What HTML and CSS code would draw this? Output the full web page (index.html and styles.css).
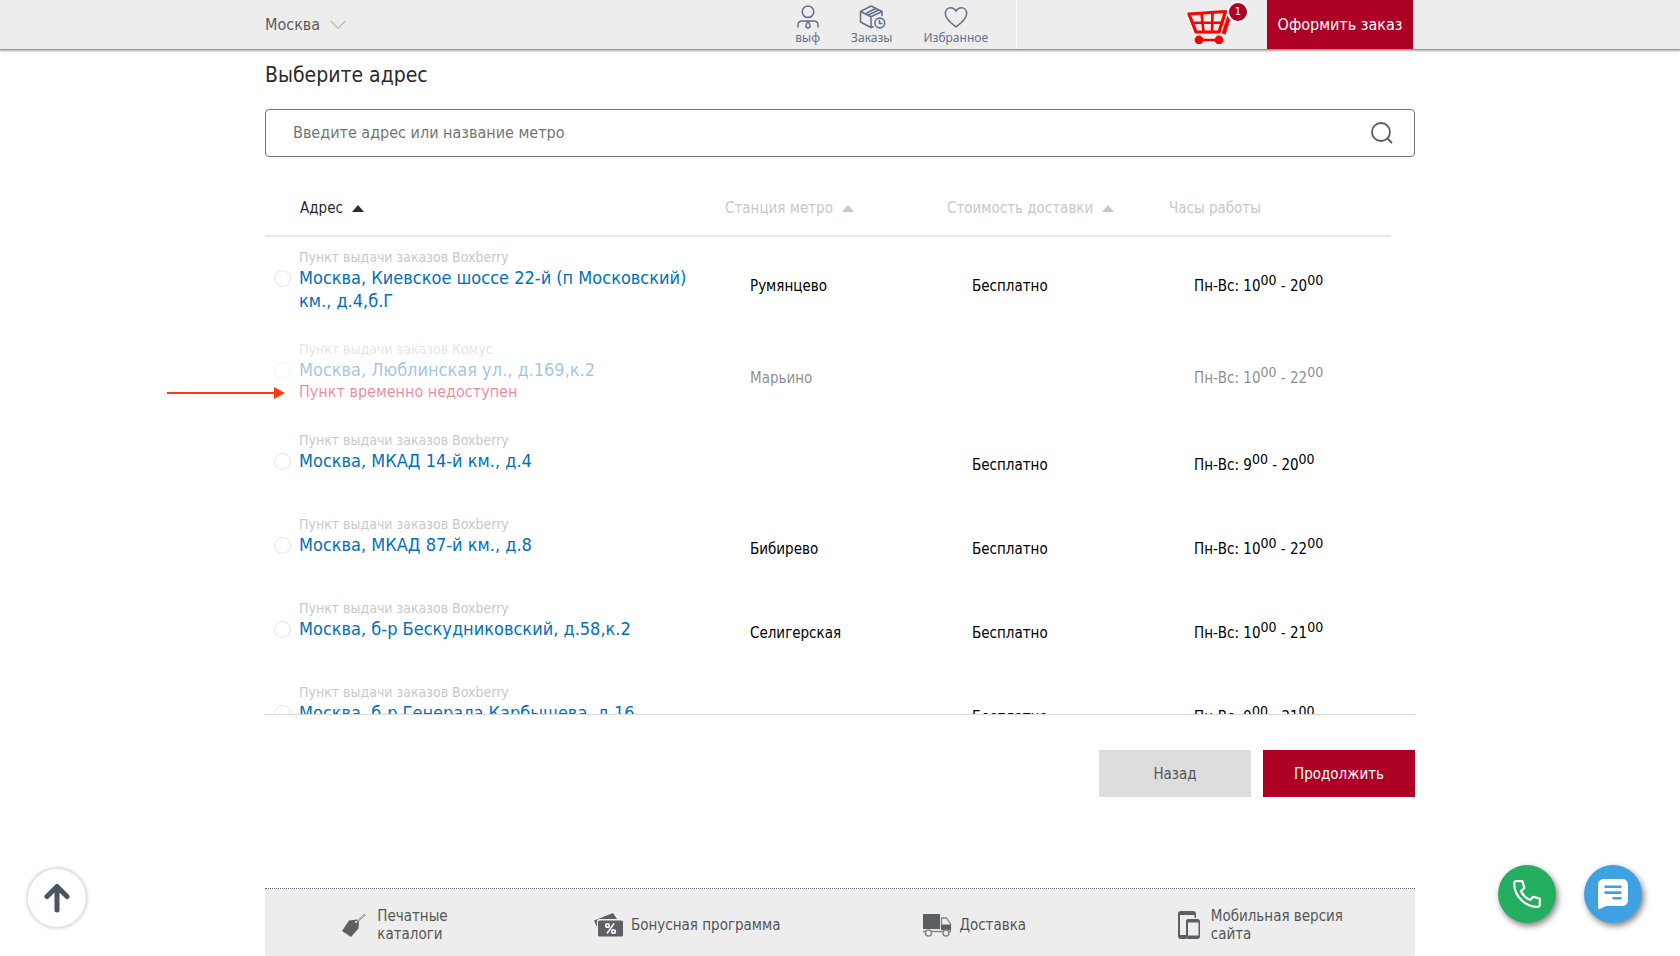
FILE: index.html
```
<!DOCTYPE html>
<html lang="ru">
<head>
<meta charset="utf-8">
<meta name="viewport" content="width=device-width, initial-scale=1">
<title>Выберите адрес</title>
<link rel="stylesheet" href="styles.css">
</head>
<body>
<header class="topbar">
  <div class="container topbar-inner">
    <button class="city" type="button">Москва
      <svg width="16" height="10" viewBox="0 0 16 10" fill="none" stroke="#bdbdbd" stroke-width="1.4"><path d="M.8 1 8 8.3 15.2 1"/></svg>
    </button>
    <nav class="usernav">
      <a class="usernav-item" href="#">
        <svg width="22" height="24" viewBox="0 0 22 24" fill="none" stroke="#64718c" stroke-width="1.5" stroke-linecap="round"><circle cx="11" cy="6.800" r="5.800"/><path d="M1 22v-1.500c0-2.800 1.600-4.500 4.200-4.500h11.600c2.600 0 4.200 1.700 4.200 4.500V22M11 16.300c-1.500 2-2.100 3.300-2.100 4.400 0 1.300.9 2.200 2.100 2.200s2.100-.9 2.100-2.200c0-1.100-.6-2.400-2.100-4.400z"/></svg>
        <span>выф</span>
      </a>
      <a class="usernav-item" href="#">
        <svg width="28" height="24" viewBox="0 0 28 24" fill="none" stroke="#64718c" stroke-width="1.600" stroke-linejoin="round" stroke-linecap="round"><path d="M13 22.500 2.500 17V6.500L13 1l11 5.500V10.500M2.500 6.500 13 11.800l11-5.300M13 11.800v10.700l2-.8M7 9l10.500-5.500M10 10.300 20.500 5"/><circle cx="21.800" cy="18" r="4.900"/><path d="M21.500 15.500V18.500h2.400"/></svg>
        <span>Заказы</span>
      </a>
      <a class="usernav-item" href="#">
        <svg width="24" height="24" viewBox="0 0 24 24" fill="none" stroke="#64718c" stroke-width="1.5" stroke-linejoin="round"><path d="M12 22C9.500 20 1.300 14.500 1.300 8.500 1.300 5 3.800 2.800 6.600 2.800c2.400 0 4.200 1.200 5.400 3.300 1.200-2.100 3-3.300 5.400-3.300 2.800 0 5.300 2.200 5.300 5.700 0 6-8.200 11.500-10.700 13.500z"/></svg>
        <span>Избранное</span>
      </a>
    </nav>
    <a class="cart" href="#" aria-label="Корзина">
      <svg width="44" height="36" viewBox="0 0 44 36" fill="none" stroke="#f00" stroke-linejoin="round"><path stroke-width="3.200" d="M2 6 38.500 3.500 32 24H9z"/><path stroke-width="2.600" d="M5 14.800h30M14.500 5.500l2 18M25.500 4.500l-.5 19"/><path stroke-width="4" d="M42.500 8 36.500 26"/><path stroke-width="2.400" d="M12 32h20"/><circle cx="12" cy="32" r="4.400" fill="#f00" stroke="none"/><circle cx="32" cy="32" r="4.400" fill="#f00" stroke="none"/></svg>
      <span class="cart-badge">1</span>
    </a>
    <button class="order" type="button">Оформить заказ</button>
  </div>
</header>

<main class="container main">
  <h1 class="title">Выберите адрес</h1>
  <form class="search">
    <input class="search-input" type="text" aria-label="Поиск пункта выдачи" placeholder="Введите адрес или название метро">
    <button class="search-btn" type="button" aria-label="Найти">
      <svg width="24" height="24" viewBox="0 0 24 24" fill="none" stroke="#5c5c5c" stroke-width="1.8"><circle cx="11" cy="11" r="9"/><path d="m17 17 5 5"/></svg>
    </button>
  </form>

  <div class="points">
    <div class="points-scroll">
      <table class="table">
        <colgroup><col class="col-address"><col class="col-info"><col class="col-info"><col class="col-info"></colgroup>
        <thead>
          <tr>
            <th class="th-address"><button class="sort active" type="button">Адрес <i class="tri"></i></button></th>
            <th><button class="sort" type="button">Станция метро <i class="tri"></i></button></th>
            <th><button class="sort" type="button">Стоимость доставки <i class="tri"></i></button></th>
            <th>Часы работы</th>
          </tr>
        </thead>
        <tbody>
          <tr>
            <td class="address"><span class="kind">Пункт выдачи заказов Boxberry</span><label class="place"><input class="radio" type="radio" name="point"><span>Москва, Киевское шоссе 22-й (п Московский) км., д.4,б.Г</span></label></td>
            <td>Румянцево</td><td>Бесплатно</td><td>Пн-Вс: 10<sup>00</sup> - 20<sup>00</sup></td>
          </tr>
          <tr class="off">
            <td class="address"><span class="kind">Пункт выдачи заказов Комус</span><label class="place"><input class="radio" type="radio" name="point" disabled><span>Москва, Люблинская ул., д.169,к.2</span></label><span class="warning">Пункт временно недоступен</span></td>
            <td>Марьино</td><td></td><td>Пн-Вс: 10<sup>00</sup> - 22<sup>00</sup></td>
          </tr>
          <tr>
            <td class="address"><span class="kind">Пункт выдачи заказов Boxberry</span><label class="place"><input class="radio" type="radio" name="point"><span>Москва, МКАД 14-й км., д.4</span></label></td>
            <td></td><td>Бесплатно</td><td>Пн-Вс: 9<sup>00</sup> - 20<sup>00</sup></td>
          </tr>
          <tr>
            <td class="address"><span class="kind">Пункт выдачи заказов Boxberry</span><label class="place"><input class="radio" type="radio" name="point"><span>Москва, МКАД 87-й км., д.8</span></label></td>
            <td>Бибирево</td><td>Бесплатно</td><td>Пн-Вс: 10<sup>00</sup> - 22<sup>00</sup></td>
          </tr>
          <tr>
            <td class="address"><span class="kind">Пункт выдачи заказов Boxberry</span><label class="place"><input class="radio" type="radio" name="point"><span>Москва, б-р Бескудниковский, д.58,к.2</span></label></td>
            <td>Селигерская</td><td>Бесплатно</td><td>Пн-Вс: 10<sup>00</sup> - 21<sup>00</sup></td>
          </tr>
          <tr>
            <td class="address"><span class="kind">Пункт выдачи заказов Boxberry</span><label class="place"><input class="radio" type="radio" name="point"><span>Москва, б-р Генерала Карбышева, д.16</span></label></td>
            <td></td><td>Бесплатно</td><td>Пн-Вс: 9<sup>00</sup> - 21<sup>00</sup></td>
          </tr>
        </tbody>
      </table>
    </div>
    <svg class="pointer" width="118" height="12" viewBox="0 0 118 12"><path d="M0 6h108" stroke="#ff3b12" stroke-width="2"/><path d="M107 0l11 6-11 6z" fill="#ff3b12"/></svg>
  </div>

  <div class="actions">
    <button class="btn" type="button">Назад</button>
    <button class="btn btn-primary" type="button">Продолжить</button>
  </div>
</main>

<footer class="container footer">
  <a class="foot-item foot-narrow" href="#">
    <svg width="24" height="24" viewBox="0 0 24 24"><path fill="#5c6064" d="M7 7.500l8-1 2 2-.5 7L9 24 0 18z"/><path d="M14 9l8-7.500 1.500.5L15 9.500" fill="none" stroke="#8a8d90"/><circle cx="14" cy="9" r="1.100" fill="#ededed"/></svg>
    <span>Печатные каталоги</span>
  </a>
  <a class="foot-item" href="#">
    <svg width="30" height="24" viewBox="0 0 30 24"><path fill="#5c6064" d="M0 7.500 19 0l4 6H5L3 7v7z"/><rect x="4" y="7.500" width="25" height="16" rx="1.500" fill="#5c6064"/><g fill="none" stroke="#fff" stroke-width="1.600"><circle cx="13.500" cy="12.500" r="1.800"/><circle cx="19.500" cy="18.500" r="1.800"/><path d="M20 10.500l-7 10"/></g></svg>
    <span>Бонусная программа</span>
  </a>
  <a class="foot-item" href="#">
    <svg width="29" height="24" viewBox="0 0 29 24"><path fill="#5c6064" d="M0 1h17v15H0z"/><path fill="none" stroke="#85888b" stroke-width="1.300" d="M0 18.500h28M18.500 16V5h5l4 6v7"/><path fill="#5c6064" d="M18 11.500h10V17H18z"/><g fill="#ededed" stroke="#85888b" stroke-width="1.500"><circle cx="5.500" cy="20" r="3"/><circle cx="23" cy="20" r="3"/></g></svg>
    <span>Доставка</span>
  </a>
  <a class="foot-item foot-wide" href="#">
    <svg width="22" height="28" viewBox="0 0 22 28"><path fill="#5c6064" fill-rule="evenodd" d="M3 0h12c2 0 3 1 3 3v4h-1.500V4H2v20h6.500v4H3c-2 0-3-1-3-3V3c0-2 1-3 3-3z"/><path fill="#5c6064" fill-rule="evenodd" d="M10 8h9.500c1.500 0 2.500 1 2.500 2.500v15c0 1.500-1 2.500-2.500 2.500H10c-1.200 0-2-1-2-2.500v-15C8 9 8.800 8 10 8zm0 3.500v13h10.500v-13z"/></svg>
    <span>Мобильная версия сайта</span>
  </a>
</footer>

<button class="fab fab-up" type="button" aria-label="Наверх">
  <svg width="26" height="30" viewBox="0 0 26 30" fill="none" stroke="#455763" stroke-width="5" stroke-linecap="round" stroke-linejoin="round"><path d="M13 27V4M3 13.500l10-10 10 10"/></svg>
</button>
<div class="fabs">
  <button class="fab fab-call" type="button" aria-label="Позвонить">
    <svg width="28" height="28" viewBox="0 0 28 28" fill="none" stroke="#fff" stroke-width="2.200" stroke-linejoin="round"><path d="M1.200 2.500 2.500 1.200h7L11.300 8 8 11c1.700 4 5 7.300 9.200 9l3-3.200 6.600 1.800v6.800l-1.300 1.400C12.500 27.500.8 16 1.200 2.500z"/></svg>
  </button>
  <button class="fab fab-chat" type="button" aria-label="Чат">
    <svg width="30" height="30" viewBox="0 0 30 30"><path fill="#fff" d="M6 0h18c4 0 6 2.500 6 6v15c0 3.500-2 6-6 6H9c-3 0-5 3-9 3V6c0-3.500 2-6 6-6z"/><path stroke="#3ea2e2" stroke-width="2.600" stroke-linecap="round" d="M7.500 7.800h15M7.500 13.600h15M15.500 19.200h7"/></svg>
  </button>
</div>
</body>
</html>
```
FILE: styles.css
```
* { box-sizing: border-box; }
body {
  margin: 0;
  min-height: 100vh;
  display: flex;
  flex-direction: column;
  background: #fff;
  color: #2b2b2b;
  font: 16px/20px "DejaVu Sans Condensed", "Noto Sans", sans-serif;
}
button, input { font: inherit; color: inherit; margin: 0; }
button { border: 0; padding: 0; background: none; cursor: pointer; }
a { color: inherit; text-decoration: none; }
svg { display: block; flex: none; }
.container { width: 100%; max-width: 1150px; margin: 0 auto; }

.topbar {
  position: sticky;
  top: 0;
  z-index: 2;
  background: #ededed;
  border-bottom: 1px solid #969696;
  box-shadow: 0 1px 2px rgba(0, 0, 0, .35);
}
.topbar-inner { display: flex; height: 49px; padding-right: 2px; }
.city { display: flex; align-items: center; gap: 10px; color: #5c5c5c; }
.usernav {
  display: flex;
  gap: 31px;
  margin-left: auto;
  padding: 5px 28px 0 0;
  border-right: 1px solid #fff;
  color: #64718c;
  font: 12px/16px "Noto Sans", sans-serif;
}
.usernav-item { display: flex; flex-direction: column; align-items: center; gap: 1px; }
.cart { position: relative; margin: 8px 36px 0 170px; }
.cart-badge {
  position: absolute;
  top: -7px;
  right: -18px;
  width: 22px;
  height: 22px;
  border: 2px solid #fff;
  border-radius: 50%;
  background: #ae0024;
  color: #fff;
  font-size: 11px;
  line-height: 18px;
  text-align: center;
}
.order { width: 146px; background: #ae0024; color: #fff; }

.main { flex: 1; padding-top: 12px; }
.title { margin: 0; font-size: 21px; line-height: 26px; font-weight: 400; }
.search {
  display: flex;
  align-items: center;
  height: 48px;
  margin-top: 21px;
  padding: 0 20px 0 27px;
  border: 1px solid #757575;
  border-radius: 4px;
}
.search-input { flex: 1; min-width: 0; padding: 0; border: 0; outline: 0; background: none; }
.search-input::placeholder { color: #757575; opacity: 1; }

.points { position: relative; margin-top: 24px; border-bottom: 1px solid #dcdcdc; }
.points-scroll { height: 533px; padding-right: 24px; overflow-y: auto; scrollbar-width: none; }
.table { width: 100%; table-layout: fixed; border-collapse: separate; border-spacing: 0; }
.col-info { width: 222px; }
th {
  position: sticky;
  top: 0;
  z-index: 1;
  height: 56px;
  padding: 0;
  border-bottom: 2px solid #e6e6e6;
  background: #fff;
  color: #c8c8c8;
  font-size: 15px;
  font-weight: 400;
  text-align: left;
}
.th-address { padding-left: 35px; }
.sort { display: flex; align-items: center; gap: 9px; }
.active { color: #2b2b2b; }
.tri { border: 6px solid transparent; border-top: 0; border-bottom: 7px solid currentColor; }
td { height: 84px; padding: 6px 0 0 25px; color: #000; font-size: 15px; }
sup { font-size: 14px; line-height: 0; vertical-align: 6px; }
.address { padding: 11px 30px 17px 34px; vertical-align: top; }
.kind { display: block; color: #c8c8c8; font-size: 14px; line-height: 18px; }
.place { position: relative; display: block; color: #0070c0; font-size: 18px; line-height: 23px; }
.radio {
  position: absolute;
  top: 4px;
  left: -25px;
  width: 17px;
  height: 17px;
  appearance: none;
  border: 1px solid #e4e4e4;
  border-radius: 50%;
}
.warning { display: block; color: #d2002f; font-size: 16px; line-height: 22px; }
.off td { opacity: .45; }
.off .place { color: #2f82cf; }
.pointer { position: absolute; top: 206px; left: -98px; }

.actions { display: flex; justify-content: flex-end; gap: 12px; padding: 35px 0; }
.btn { width: 152px; height: 47px; background: #ddd; color: #555; font-size: 15px; }
.btn-primary { background: #ae0024; color: #fff; }

.footer {
  display: grid;
  grid-template-columns: repeat(4, 1fr);
  height: 68px;
  padding-top: 4px;
  border-top: 1px dotted #6b6b80;
  background: #ededed;
  color: #555;
  font-size: 15px;
  line-height: 18px;
}
.foot-item { display: flex; align-items: center; justify-content: center; gap: 7px; padding-right: 18px; }
.foot-narrow, .foot-wide { gap: 11px; }
.foot-narrow span { width: 80px; }
.foot-wide span { width: 136px; }

.fab { display: grid; place-items: center; width: 58px; height: 58px; border-radius: 50%; box-shadow: 2px 3px 6px rgba(0, 0, 0, .5); }
.fab-up {
  position: fixed;
  left: 28px;
  bottom: 29px;
  background: #fff;
  box-shadow: 0 0 3px 2px rgba(0, 0, 0, .14);
}
.fabs { position: fixed; right: 38px; bottom: 33px; display: flex; gap: 28px; }
.fab-call { background: #24ae60; }
.fab-chat { background: #3ea2e2; }
```
